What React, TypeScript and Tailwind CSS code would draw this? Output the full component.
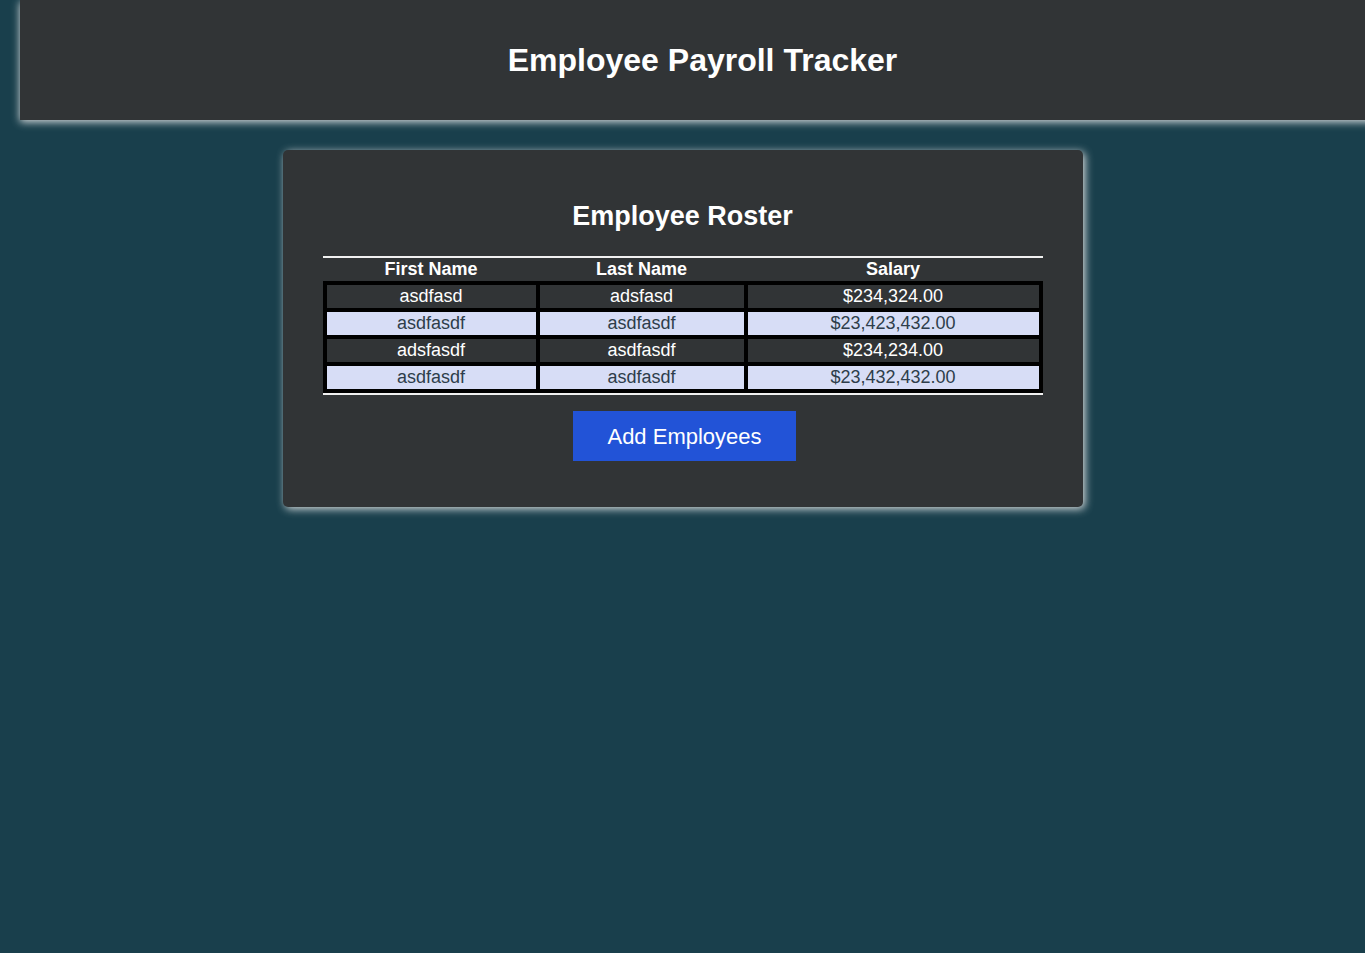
const employees = [
  { first: 'asdfasd', last: 'adsfasd', salary: '$234,324.00' },
  { first: 'asdfasdf', last: 'asdfasdf', salary: '$23,423,432.00' },
  { first: 'adsfasdf', last: 'asdfasdf', salary: '$234,234.00' },
  { first: 'asdfasdf', last: 'asdfasdf', salary: '$23,432,432.00' },
];

const cols = 'grid grid-cols-[209px_204px_291px] gap-x-[4px]';

export default function App() {
  return (
    <div className="min-h-[953px] overflow-hidden bg-[#193f4c] font-['Liberation_Sans',Arial,sans-serif] pt-0">
      <header className="ml-[20px] flex h-[120px] w-full items-center justify-center bg-[#313436] shadow-[0_2px_8px_#d8dcdd]">
        <h1 className="text-[32px] font-bold text-white">Employee Payroll Tracker</h1>
      </header>

      <main className="mx-auto mt-[30px] w-[800px] rounded-[5px] bg-[#313436] px-[40px] pb-[46px] pt-[50px] shadow-[2px_2px_8px_#d8dcdd]">
        <h2 className="text-center text-[27px] leading-[32px] font-bold text-white">Employee Roster</h2>

        <div className="mt-[24px] border-y-2 border-[#f0f0f0]">
          <div className={`${cols} px-[4px] text-[18px] leading-[23px] font-bold text-white`}>
            <div className="text-center">First Name</div>
            <div className="text-center">Last Name</div>
            <div className="text-center">Salary</div>
          </div>
          <div className="flex flex-col gap-[4px] bg-black p-[4px]">
            {employees.map((e, i) => {
              const light = i % 2 === 1;
              const cell = light
                ? 'bg-[#d7ddf6] text-[#2e3d4b]'
                : 'bg-[#313436] text-white';
              return (
                <div key={i} className={`${cols} text-[18px] leading-[23px]`}>
                  <div className={`${cell} text-center`}>{e.first}</div>
                  <div className={`${cell} text-center`}>{e.last}</div>
                  <div className={`${cell} text-center`}>{e.salary}</div>
                </div>
              );
            })}
          </div>
        </div>

        <div className="mt-[16px] flex justify-center pl-[4px]">
          <button className="h-[50px] w-[223px] bg-[#2253d7] text-[22px] text-white">
            Add Employees
          </button>
        </div>
      </main>
    </div>
  );
}
